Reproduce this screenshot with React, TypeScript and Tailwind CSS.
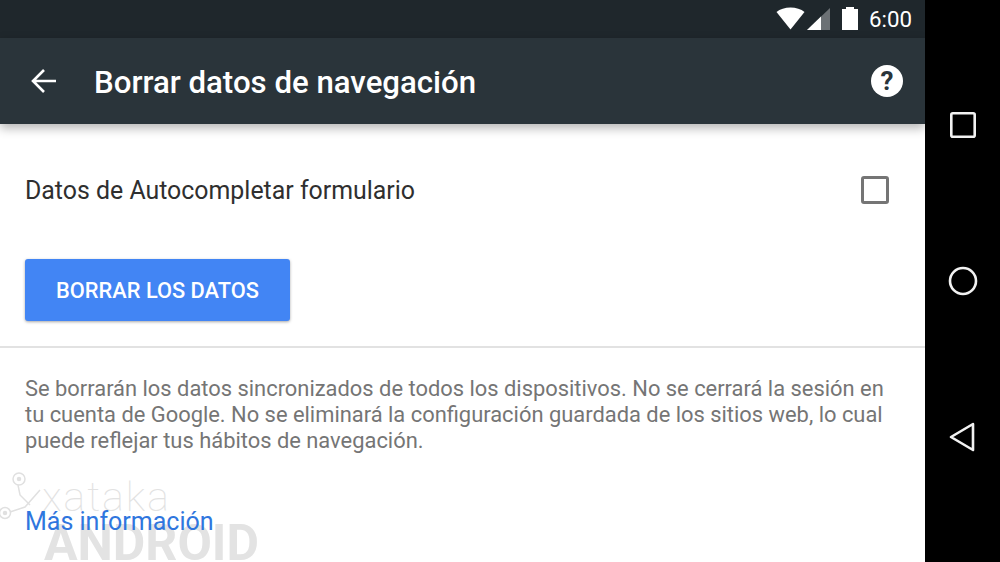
const roboto = { fontFamily: "Roboto, sans-serif" };

function StatusIcons() {
  return (
    <svg width="84" height="38" viewBox="0 0 84 38" className="block">
      <path d="M.5 12C4 9 9 7.500 14.500 7.500S25 9 28.500 12L14.500 29.500z" fill="#fff" />
      <path d="M31 30 54 8v22z" fill="#6c7175" />
      <path d="M31 30 45 16.500V30z" fill="#fff" />
      <path d="M66 9h4V7h8v2h4v21H66z" fill="#fff" />
    </svg>
  );
}

function NavBar() {
  return (
    <div className="flex w-[75px] shrink-0 flex-col items-center bg-black pt-[112px]">
      <svg width="26" height="26" viewBox="0 0 26 26">
        <rect x="1.300" y="1.300" width="23.400" height="23.400" rx="1.500" fill="none" stroke="#f2f2f2" strokeWidth="2.600" />
      </svg>
      <svg width="32" height="32" viewBox="0 0 32 32" className="mt-[127px]">
        <circle cx="16" cy="16" r="13" fill="none" stroke="#f2f2f2" strokeWidth="2.600" />
      </svg>
      <svg width="28" height="32" viewBox="0 0 28 32" className="mt-[124px] mr-[2px]">
        <path d="M25 3 L3 16 L25 29 Z" fill="none" stroke="#f2f2f2" strokeWidth="2.600" strokeLinejoin="round" />
      </svg>
    </div>
  );
}

export default function App() {
  return (
    <div className="flex h-[562px] w-[1000px] overflow-hidden bg-white" style={roboto}>
      <div className="relative flex w-[925px] shrink-0 flex-col">
        <div className="flex h-[38px] items-center justify-end bg-[#1f272c] pr-[13px] text-white">
          <StatusIcons />
          <span className="ml-[9px] text-[22.3px] leading-none">6:00</span>
        </div>
        <header className="z-10 flex h-[86px] items-center bg-[#2a343a] pr-[22px] shadow-[0_4px_10px_rgba(0,0,0,0.3)]">
          <svg width="30" height="30" viewBox="0 0 30 30" className="ml-[29px]">
            <path d="M27 15H4M15 4 4 15l11 11" fill="none" stroke="#fff" strokeWidth="2.600" />
          </svg>
          <h1 className="ml-[35px] flex-1 pt-[4px] text-[31.2px] font-medium text-white">Borrar datos de navegación</h1>
          <div className="flex h-[32px] w-[32px] items-center justify-center rounded-full bg-white text-[26px] font-bold leading-none text-[#2a343a]">?</div>
        </header>

        <main className="relative flex flex-1 flex-col">
          <div className="flex h-[135px] items-center justify-between pb-[3px] pl-[25px] pr-[36px]">
            <span className="pt-[2px] text-[24.9px] text-[#2f2f2f]">Datos de Autocompletar formulario</span>
            <span className="h-[28px] w-[28px] rounded-[3px] border-[3px] border-[#757575]" />
          </div>
          <div className="pl-[25px]">
            <button className="h-[62px] w-[265px] rounded-[3px] bg-[#4285f4] pt-[3px] text-[21.8px] font-medium text-white shadow-[0_1px_3px_rgba(0,0,0,0.35)]">BORRAR LOS DATOS</button>
          </div>
          <div className="mt-[25px] border-t-2 border-[#e2e2e2]" />
          <p className="mt-[28px] pl-[25px] pr-[30px] text-[21.9px] leading-[26px] text-[#757575]">
            Se borrarán los datos sincronizados de todos los dispositivos. No se cerrará la sesión en tu cuenta de Google. No se eliminará la configuración guardada de los sitios web, lo cual puede reflejar tus hábitos de navegación.
          </p>
          <a className="relative z-10 mt-[53px] pl-[25px] text-[25px] leading-[30px] text-[#2f76de]">Más información</a>

          {/* watermark */}
          <div className="pointer-events-none absolute left-0 top-[344px] h-[94px] w-[270px]">
            <svg width="45" height="75" viewBox="0 0 45 75" className="absolute left-0 top-[2px]" fill="none" stroke="#e0e0e0" strokeWidth="1.500">
              <circle cx="19" cy="9" r="6" />
              <circle cx="19" cy="9" r="1.500" fill="#e0e0e0" />
              <circle cx="5" cy="43" r="5.500" />
              <circle cx="5" cy="43" r="1.500" fill="#e0e0e0" />
              <path d="M18 15l2 10 10 10M40 20 25 37 10 42" />
            </svg>
            <span className="absolute left-[42px] top-[9px] text-[41px] font-thin leading-none tracking-[2px] text-[#e2e2e2]">xataka</span>
            <span className="absolute left-[44px] top-[50px] text-[50px] font-bold leading-none text-[#e3e3e3]">ANDROID</span>
          </div>
        </main>
      </div>
      <NavBar />
    </div>
  );
}
